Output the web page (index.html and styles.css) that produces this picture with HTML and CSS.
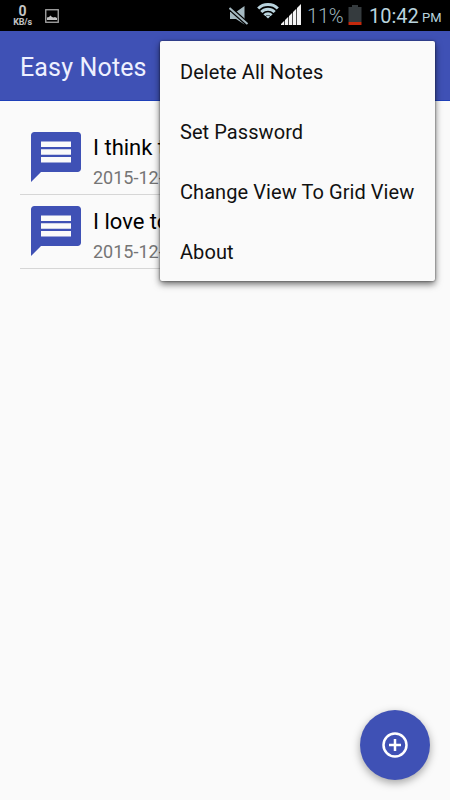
FILE: index.html
```
<!DOCTYPE html>
<html lang="en">
<head>
    <meta charset="UTF-8">
    <meta name="viewport" content="width=device-width, initial-scale=1.0">
    <title>Easy Notes</title>
    <link rel="stylesheet" href="styles.css">
</head>
<body>

    <!-- Status Bar -->
    <div class="status-bar">
        <div class="net-speed">
            <span class="speed-value">0</span>
            <span class="speed-unit">KB/s</span>
        </div>
        <svg class="picture-icon" width="14" height="14" viewBox="0 0 14 14">
            <rect x="0.75" y="0.75" width="12.5" height="12.5" fill="none" stroke="#a9a9a9" stroke-width="1.3"/>
            <path d="M2 11V8.500l2-.5 1.500-1.500L7 8l1.500.500L10 8l2 1v2z" fill="#c4c4c4"/>
        </svg>
        <div class="status-right">
            <svg class="mute-icon" width="20" height="20" viewBox="0 0 20 20">
                <path d="M1 6h6l8.500-6v18.500L7 13H1z" fill="#a5b9c1"/>
                <path d="M0 1.500L19 18.500" stroke="#000" stroke-width="4.500"/>
                <path d="M0.500 2L18.500 18" stroke="#a5b9c1" stroke-width="2"/>
            </svg>
            <svg class="wifi-icon" width="22" height="16" viewBox="0 0 22 16">
                <g fill="none" stroke="#b9d3dd" stroke-width="3">
                    <path d="M1.200 5.500C6.500 0.300 15.500 0.300 20.800 5.500"/>
                    <path d="M4.300 9C8.200 5.200 13.800 5.200 17.700 9"/>
                    <path d="M7.400 12.200C9.500 10.100 12.500 10.100 14.600 12.200"/>
                </g>
                <path d="M8.900 13.400q2.100-1.600 4.200 0L11 15.600z" fill="#b9d3dd"/>
            </svg>
            <svg class="signal-icon" width="20" height="20" viewBox="0 0 20 20">
                <path d="M0 20v-1l3.300-3.300V20zM4 20v-5l3.300-3.300V20zM8 20v-9l3.300-3.300V20zM12 20V7l3.300-3.300V20zM16 20V3l4-4v21z" fill="#f4f4f4"/>
            </svg>
            <span class="battery-level">11%</span>
            <svg class="battery-icon" width="14" height="20" viewBox="0 0 14 20">
                <path d="M0.500 2H4V0h6v2h3.500v15H0.500z" fill="#353b3e"/>
                <rect x="0.500" y="17" width="13" height="3" fill="#c4290c"/>
            </svg>
            <span class="clock">10:42</span>
            <span class="meridiem">PM</span>
        </div>
    </div>

    <!-- App Bar -->
    <div class="app-bar">
        <h1>Easy Notes</h1>
    </div>

    <!-- Notes -->
    <ul class="note-list">
        <li class="note">
            <svg class="note-icon" width="50" height="50" viewBox="2 2 20 20">
                <path d="M20.700 2H3.300C2.600 2 2 2.600 2 3.300V22l4-4h14.700c.7 0 1.300-.6 1.300-1.300V3.300C22 2.600 21.400 2 20.700 2zM18 14.200H6v-2.200h12v2.200zM18 11.100H6V8.900h12v2.200zM18 8H6V5.800h12V8z" fill="#3f51b5"/>
            </svg>
            <div class="note-text">
                <h2>I think t</h2>
                <p>2015-12-</p>
            </div>
        </li>
        <li class="note">
            <svg class="note-icon" width="50" height="50" viewBox="2 2 20 20">
                <path d="M20.700 2H3.300C2.600 2 2 2.600 2 3.300V22l4-4h14.700c.7 0 1.300-.6 1.300-1.300V3.300C22 2.600 21.400 2 20.700 2zM18 14.200H6v-2.200h12v2.200zM18 11.100H6V8.900h12v2.200zM18 8H6V5.800h12V8z" fill="#3f51b5"/>
            </svg>
            <div class="note-text">
                <h2>I love to</h2>
                <p>2015-12-</p>
            </div>
        </li>
    </ul>

    <!-- Overflow Menu -->
    <div class="menu">
        <a href="#">Delete All Notes</a>
        <a href="#">Set Password</a>
        <a href="#">Change View To Grid View</a>
        <a href="#">About</a>
    </div>

    <!-- Add Button -->
    <button class="add-button" aria-label="Add note">
        <svg width="26" height="26" viewBox="0 0 26 26" fill="none" stroke="#ffffff" stroke-width="2.500">
            <circle cx="13" cy="13" r="11.500"/>
            <path d="M13 7v12M7 13h12"/>
        </svg>
    </button>

</body>
</html>
```

FILE: styles.css
```
* {
    margin: 0;
    padding: 0;
    box-sizing: border-box;
}

body {
    font-family: Roboto, sans-serif;
    background-color: #fafafa;
    color: #000000;
    height: 100vh;
    overflow: hidden;
    position: relative;
}

/* Status Bar */
.status-bar {
    display: flex;
    height: 31px;
    padding: 0 8px 0 12px;
    background-color: #000000;
    color: #b9d3dd;
}

.net-speed {
    width: 21px;
    padding-top: 4px;
    display: flex;
    flex-direction: column;
    align-items: center;
    color: #c4c4c4;
    font-weight: bold;
}

.speed-value {
    font-size: 14px;
    line-height: 14px;
}

.speed-unit {
    font-size: 9px;
    line-height: 8px;
    letter-spacing: -0.2px;
}

.picture-icon {
    margin: 9px 0 0 12px;
}

.status-right {
    display: flex;
    margin-left: auto;
    white-space: nowrap;
}

.mute-icon {
    margin: 6px 8px 0 0;
}

.wifi-icon {
    margin: 3px 2px 0 0;
}

.signal-icon {
    margin: 5px 6px 0 0;
    overflow: visible;
}

.battery-level {
    width: 41px;
    font-size: 20px;
    font-weight: 300;
    letter-spacing: -0.2px;
    line-height: 33px;
    color: #9fb5be;
}

.battery-icon {
    margin: 5px 7px 0 0;
}

.clock {
    width: 53px;
    font-size: 20px;
    line-height: 33px;
}

.meridiem {
    width: 20px;
    font-size: 13px;
    line-height: 36px;
}

/* App Bar */
.app-bar {
    display: flex;
    align-items: center;
    height: 70px;
    padding: 4px 20px 0;
    background-color: #3f51b5;
    border-bottom: 1px solid #1f40b8;
}

.app-bar h1 {
    font-size: 25px;
    font-weight: normal;
    letter-spacing: 0.15px;
    color: #eef0ff;
}

/* Notes */
.note-list {
    list-style: none;
    padding: 20px 20px 0;
}

.note {
    display: flex;
    gap: 12px;
    height: 74px;
    padding: 11px 0 0 11px;
    border-bottom: 1px solid #d6d6d6;
}

.note-text h2 {
    padding-top: 2px;
    font-size: 22px;
    font-weight: normal;
    line-height: 28px;
}

.note-text p {
    font-size: 18px;
    line-height: 31px;
    color: #757575;
}

/* Overflow Menu */
.menu {
    position: absolute;
    top: 41px;
    right: 15px;
    width: 275px;
    height: 240px;
    background-color: #fafafa;
    border-radius: 2px;
    box-shadow: 0 3px 7px rgba(0, 0, 0, 0.6), 0 0 2px rgba(0, 0, 0, 0.6);
}

.menu a {
    display: block;
    padding: 0 20px;
    font-size: 20px;
    letter-spacing: 0.07px;
    line-height: 63px;
    height: 60px;
    color: #111111;
    text-decoration: none;
    white-space: nowrap;
}

/* Add Button */
.add-button {
    position: absolute;
    right: 20px;
    bottom: 20px;
    width: 70px;
    height: 70px;
    display: flex;
    align-items: center;
    justify-content: center;
    border: none;
    border-radius: 50%;
    background-color: #3f51b5;
    box-shadow: 0 3px 8px rgba(0, 0, 0, 0.35);
    cursor: pointer;
}
```
